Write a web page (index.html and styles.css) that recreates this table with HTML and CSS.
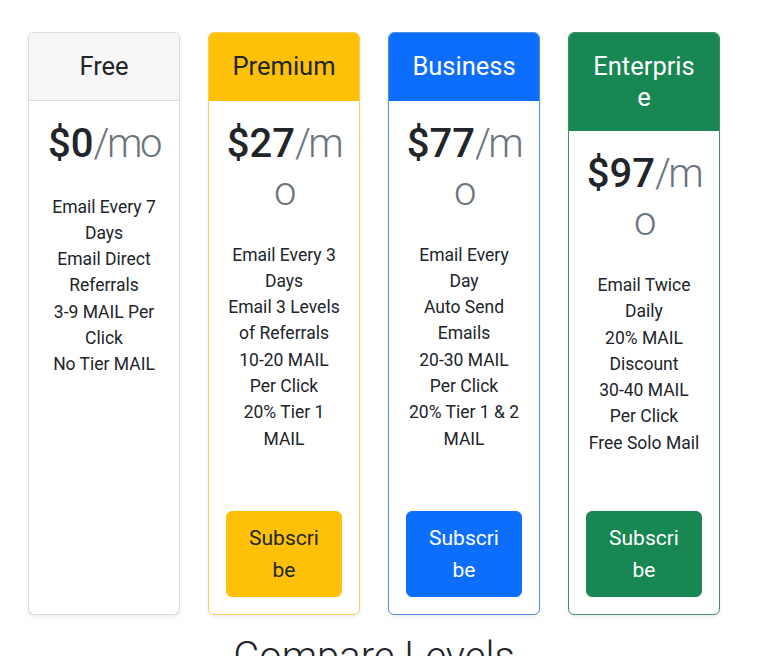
FILE: index.html
```html
<!DOCTYPE html>
<html lang="en">
<head>
<meta charset="utf-8">
<title>Pricing</title>
<link rel="stylesheet" href="styles.css">
</head>
<body>
<main class="page">
  <div class="cards">
    <div class="card card-free">
      <div class="card-header"><h4 class="plan">Free</h4></div>
      <div class="card-body">
        <h1 class="price">$0<span class="per">/mo</span></h1>
        <ul class="features">
          <li>Email Every 7 Days</li>
          <li>Email Direct Referrals</li>
          <li>3-9 MAIL Per Click</li>
          <li>No Tier MAIL</li>
        </ul>
      </div>
    </div>
    <div class="card card-premium">
      <div class="card-header"><h4 class="plan">Premium</h4></div>
      <div class="card-body">
        <h1 class="price">$27<span class="per">/mo</span></h1>
        <ul class="features">
          <li>Email Every 3 Days</li>
          <li>Email 3 Levels of Referrals</li>
          <li>10-20 MAIL Per Click</li>
          <li>20% Tier 1 MAIL</li>
        </ul>
        <button class="btn btn-premium" type="button">Subscribe</button>
      </div>
    </div>
    <div class="card card-business">
      <div class="card-header"><h4 class="plan">Business</h4></div>
      <div class="card-body">
        <h1 class="price">$77<span class="per">/mo</span></h1>
        <ul class="features">
          <li>Email Every Day</li>
          <li>Auto Send Emails</li>
          <li>20-30 MAIL Per Click</li>
          <li>20% Tier 1 &amp; 2 MAIL</li>
        </ul>
        <button class="btn btn-business" type="button">Subscribe</button>
      </div>
    </div>
    <div class="card card-enterprise">
      <div class="card-header"><h4 class="plan">Enterprise</h4></div>
      <div class="card-body">
        <h1 class="price">$97<span class="per">/mo</span></h1>
        <ul class="features">
          <li>Email Twice Daily</li>
          <li>20% MAIL Discount</li>
          <li>30-40 MAIL Per Click</li>
          <li>Free Solo Mail</li>
        </ul>
        <button class="btn btn-enterprise" type="button">Subscribe</button>
      </div>
    </div>
  </div>
  <h2 class="compare">Compare Levels</h2>
</main>
</body>
</html>
```

FILE: styles.css
```css
* { box-sizing: border-box; }

html, body {
  margin: 0;
  padding: 0;
  background: #fff;
}

body {
  font-family: Roboto, "Liberation Sans", Arial, sans-serif;
  color: #212529;
  font-size: 17.5px;
  line-height: 26.3px;
}

.page {
  padding: 32px 40px 0 28px;
}

.cards {
  display: grid;
  grid-template-columns: repeat(4, 152px);
  column-gap: 28px;
  align-items: stretch;
}

.card {
  display: flex;
  flex-direction: column;
  border: 1px solid rgba(0, 0, 0, 0.14);
  border-radius: 6px;
  background: #fff;
  box-shadow: 0 2px 4px rgba(0, 0, 0, 0.075);
  text-align: center;
  overflow: hidden;
}

.card-header {
  padding: 18px 20px;
  border-bottom: 1px solid rgba(0, 0, 0, 0.12);
  background: #f7f7f7;
}

.plan {
  margin: 0;
  font-size: 25.5px;
  line-height: 30.5px;
  font-weight: 400;
  word-break: break-all;
}

.card-body {
  flex: 1;
  display: flex;
  flex-direction: column;
  padding: 17px;
}

.price {
  margin: 2px 0 0;
  font-size: 40px;
  line-height: 48px;
  font-weight: 500;
  word-break: break-all;
}

.per {
  font-family: "Roboto Light", Roboto, "Liberation Sans", sans-serif;
  font-weight: 300;
  color: #6c757d;
  letter-spacing: -2.5px;
}

.features {
  list-style: none;
  margin: 26px 0 55px;
  padding: 0;
}

.btn {
  margin-top: auto;
  width: 100%;
  padding: 9.5px 17px;
  border: 1px solid transparent;
  border-radius: 6px;
  font-family: inherit;
  font-size: 21px;
  line-height: 32.4px;
  font-weight: 400;
  word-break: break-all;
  cursor: pointer;
}

.card-premium { border-color: #f5cf5e; }
.card-premium .card-header { background: #ffc107; border-bottom-color: #ffc107; color: #212529; }
.btn-premium { background: #ffc107; border-color: #ffc107; color: #212529; }

.card-business { border-color: #4d8ee0; }
.card-business .card-header { background: #0d6efd; border-bottom-color: #0d6efd; color: #fff; }
.btn-business { background: #0d6efd; border-color: #0d6efd; color: #fff; }

.card-enterprise { border-color: #3d8f69; }
.card-enterprise .card-header { background: #198754; border-bottom-color: #198754; color: #fff; }
.btn-enterprise { background: #198754; border-color: #198754; color: #fff; }

.compare {
  margin: 18px 0 0 0;
  text-align: center;
  font-size: 40px;
  line-height: 48px;
  font-weight: 300;
  color: #212529;
}
```
